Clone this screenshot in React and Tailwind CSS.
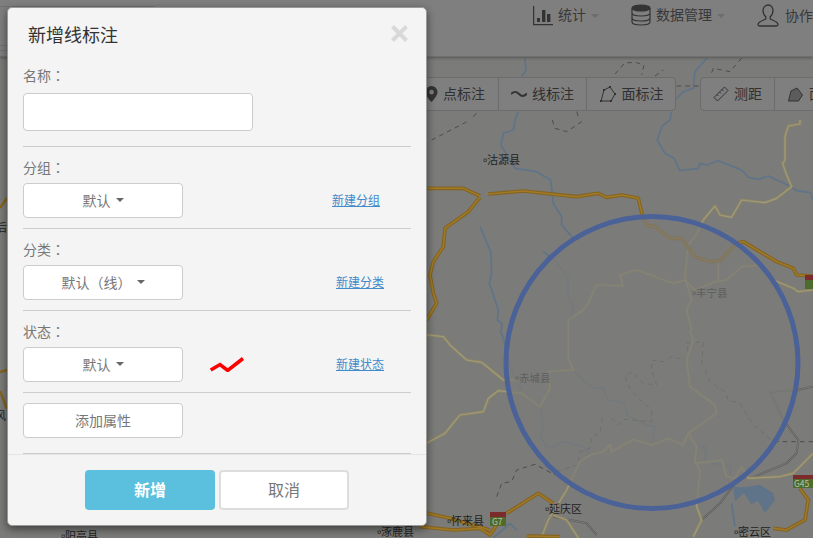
import { Fragment } from "react";

const cjk = "font-['Noto_Sans_CJK_SC','Liberation_Sans',sans-serif] [text-spacing-trim:space-all]";

// map lines, in 3x coords of the two map crops
const upper = {
  rivers: [
    "285,0 280,30 250,40 243,75 285,145 350,155 392,180 400,250 425,290 425,315 460,355",
    "750,0 725,20 712,60 735,100 762,115 780,152 835,145 840,130 860,135 895,122 965,150 985,172 1015,178 1045,168 1110,198 1130,212 1172,218 1179,240",
    "180,320 212,395 215,460 208,490 235,570 232,600 245,610 245,630",
    "370,395 405,420 445,475 445,530 460,560 445,620",
  ],
  yellow: [
    "1140,0 1140,12 1105,18 1095,50 1095,120 1088,130 1100,165 1115,200 1070,235 1035,248 965,240 935,292 900,285 885,258 850,300 825,350 805,375 795,470 800,490 815,540 800,570 815,630",
    "445,630 445,600 490,570 505,550 530,495 610,497 600,465 650,450 760,490 795,480 825,510 885,485 920,480 965,440 1020,435 1060,480 1120,505 1135,515 1179,510",
    "895,425 895,480",
  ],
  orange: [
    "0,205 130,205 180,228",
    "205,222 310,213 470,230 535,220 560,232 605,225 655,235 668,290 680,315 705,320 750,355 785,355 825,410 870,425 900,422 950,370 970,365 1070,425 1120,445 1130,465 1179,468",
    "180,232 145,275 75,325 70,380 40,425 30,465 40,520 50,550 20,600",
  ],
  dashed: ["35,60 145,3", "397,0 405,25 440,35 485,5"],
};

const lower = {
  rivers: [
    "360,230 370,290 360,320 385,355 430,335 490,350 510,375",
    "460,125 520,175 550,175 565,210 615,220 620,255 680,285 705,290 695,335",
    "240,0 250,25 270,110 305,180",
    "935,520 945,590",
    "835,350 855,350 855,395 930,410 930,435",
    "220,624 270,580 290,600",
  ],
  yellow: [
    "0,12 70,20 90,45 140,90 185,97 250,150 305,150",
    "0,350 75,310 120,255 190,245 205,205 235,182 305,190 360,230 390,175 385,125 460,120 445,85 445,0",
    "480,395 510,375 550,365 570,345 575,365 640,328 695,345 745,325 790,345 805,310 890,250 885,225 810,170 800,90 820,30 810,0",
    "805,310 830,350 825,395 840,420 830,530 845,570 820,620",
    "825,400 870,395 905,390 920,440 945,445 965,410 985,445 1080,440 1120,430 1179,370",
    "480,395 440,480 385,570 365,620",
    "400,555 440,570 475,624",
  ],
  orange: [
    "0,545 90,565 210,600",
    "260,550 355,490 400,520",
    "0,590 100,600 180,595 210,615 250,555",
    "1140,475 1165,510 1155,570 1100,600 1060,595",
    "320,618 420,620",
  ],
  dashed: [
    "230,500 245,460 275,455 290,420 345,403 405,435",
    "410,425 470,405",
    "475,395 480,365 510,355 515,320 540,310 548,255",
    "575,265 595,285 610,268 695,275 695,240 660,210 630,175 615,140 635,125 670,160 710,165 695,120 695,90 730,95 755,80 795,90",
    "805,65 800,40 850,35 845,105",
    "855,120 870,155 915,185 925,210 960,220 1000,285 1060,335 1180,335",
  ],
  rail: [
    "1050,185 1130,180 1179,170",
    "1050,185 1090,270 1135,330 1130,370 1100,400 990,445",
    "400,560 500,580 530,615",
    "845,570 900,520 945,460",
  ],
};

const top = {
  rivers: ["315,175 318,210 305,230", "295,335 285,360", "860,175 825,215 820,265 790,275 765,300", "755,335 750,360"],
  dashed: [
    "585,222 615,188 650,188 672,195 665,225",
    "705,228 730,210",
    "770,258 840,258",
    "875,218 880,205 930,215 965,175",
    "160,350 175,333",
    "470,335 475,350",
  ],
};

const Lines = ({ list = [], color, width, dash }) =>
  list.map((p) => (
    <polyline key={p} points={p} fill="none" stroke={color} strokeWidth={width} strokeDasharray={dash} strokeLinejoin="round" />
  ));

const Road = ({ list, edge, core, width }) => (
  <Fragment>
    <Lines list={list} color={edge} width={width} />
    <Lines list={list} color={core} width={width * 0.4} />
  </Fragment>
);

const MapLayer = ({ data }) => (
  <Fragment>
    <Lines list={data.rivers} color="#5f7489" width={5} />
    <Lines list={data.rail} color="#5c5c5c" width={6} />
    <Lines list={data.rail} color="#8a8a8a" width={2} />
    <Lines list={data.dashed} color="#4c4c4c" width={3} dash="14 12" />
    {data.yellow && <Road list={data.yellow} edge="#8b8565" core="#a09a7c" width={9} />}
    {data.orange && <Road list={data.orange} edge="#85641f" core="#a07a28" width={11} />}
  </Fragment>
);

const mapLabels = [
  [487, 164, "沽源县", "#1f1f1f", 11],
  [696, 297, "丰宁县", "#5e5e5e", 10.5],
  [519, 382, "赤城县", "#5e5e5e", 10.5],
  [549, 513, "延庆区", "#1f1f1f", 11],
  [451, 525, "怀来县", "#1f1f1f", 11],
  [738, 536, "密云区", "#1f1f1f", 11],
  [65, 540, "阳高县", "#1f1f1f", 11],
  [381, 536, "涿鹿县", "#1f1f1f", 11],
];

const MapBackdrop = () => (
  <svg className="absolute inset-0" width="813" height="538" viewBox="0 0 813 538">
    <rect width="813" height="538" fill="#7b7b79" />
    <g transform="translate(420 120) scale(0.3333)">
      <MapLayer data={upper} />
    </g>
    <g transform="translate(420 330) scale(0.3333)">
      <MapLayer data={lower} />
    </g>
    <g transform="translate(420 0) scale(0.3333)">
      <MapLayer data={top} />
    </g>
    {/* bits of the map left of the dialog */}
    <path d="M0 208L7 198M0 372L7 370M0 391L7 409" stroke="#85641f" strokeWidth="2.500" fill="none" />
    <text x="-4" y="232" fontSize="11" fill="#1f1f1f" fontFamily="'Noto Sans CJK SC', sans-serif">后</text>
    <text x="-5" y="420" fontSize="11" fill="#1f1f1f" fontFamily="'Noto Sans CJK SC', sans-serif">风</text>
    {/* area inside the ring is washed out */}
    <circle cx="652" cy="362.500" r="146" fill="#7b7b79" fillOpacity="0.72" />
    <circle cx="652" cy="362.500" r="146" fill="none" stroke="#4b6298" strokeWidth="5" />
    {/* lake */}
    <path d="M733 487l12 0 15-2 13 8 2 7-10 13-7-12-7 3-7-11-9 8z" fill="#5f7489" />
    {/* road shields */}
    <rect x="490" y="512" width="16" height="10" fill="#7d2a2a" />
    <rect x="490" y="517" width="16" height="9" rx="1" fill="#4d6b2c" />
    <text x="492" y="525" fontSize="8.500" fill="#b9c4a8">G7</text>
    <rect x="793" y="475" width="20" height="10" fill="#7d2a2a" />
    <rect x="793" y="479" width="20" height="9" rx="1" fill="#4d6b2c" />
    <text x="794" y="487" fontSize="8.500" fill="#b9c4a8">G45</text>
    <rect x="805" y="275" width="8" height="10" fill="#7d2a2a" />
    <rect x="805" y="280" width="8" height="9" fill="#4d6b2c" />
    {mapLabels.map(([x, y, t, c, s]) => (
      <Fragment key={t}>
        <rect x={x - 3} y={y - 5} width="2.500" height="2.500" fill="none" stroke={c} strokeWidth="0.6" />
        <text x={x} y={y} fontSize={s} fill={c} fontFamily="'Noto Sans CJK SC', sans-serif">
          {t}
        </text>
      </Fragment>
    ))}
  </svg>
);

const Caret = ({ className = "border-t-[#666]" }) => (
  <span className={`inline-block w-0 h-0 border-x-4 border-x-transparent border-t-4 ${className}`} />
);

const HeadItem = ({ icon, label }) => (
  <div className="flex items-center">
    {icon}
    <span className="text-[14px] leading-[20px] mb-[2px] text-[#383838] ml-[5px]">{label}</span>
  </div>
);

const Header = () => (
  <header className="absolute top-0 left-0 w-[813px] h-[57px] bg-[#7f7f7f] border-b border-[#6f6f6f] shadow-[0_1px_3px_rgba(0,0,0,0.3)] overflow-hidden">
    <div className="absolute left-0 top-[6px] w-[155px] border-t border-[#727272]" />
    <div className="absolute left-0 top-[45px] w-[8px] h-[6px] border-y border-[#727272]" />
    <div className="flex items-start pt-[4px] pl-[532px] whitespace-nowrap">
      <HeadItem
        label="统计"
        icon={
          <svg width="21" height="22" viewBox="0 0 21 22" fill="#333">
            <path d="M1 2h1.200v18H21v1.200H1z" />
            <rect x="5" y="14" width="3" height="4" />
            <rect x="10" y="6" width="3.400" height="12" />
            <rect x="15" y="10" width="3.400" height="8" />
          </svg>
        }
      />
      <span className="ml-[5px] mt-[10px] flex"><Caret className="border-t-[#6d6d6d]" /></span>
      <div className="ml-[32px]">
        <HeadItem
          label="数据管理"
          icon={
            <svg width="20" height="22" viewBox="0 0 20 22" fill="none" stroke="#333" strokeWidth="1.200">
              <ellipse cx="10" cy="4" rx="9" ry="3" fill="#333" />
              <path d="M1 4v14c0 1.800 4 3 9 3s9-1.200 9-3V4M1 9c0 1.800 4 3 9 3s9-1.200 9-3M1 14c0 1.800 4 3 9 3s9-1.200 9-3" />
            </svg>
          }
        />
      </div>
      <span className="ml-[5px] mt-[10px] flex"><Caret className="border-t-[#6d6d6d]" /></span>
      <div className="ml-[32px]">
        <HeadItem
          label="协作"
          icon={
            <svg width="23" height="23" viewBox="0 0 23 23" fill="none" stroke="#333" strokeWidth="1.300">
              <path d="M11.500 1c-3.400 0-5.500 2.500-5.500 5.500 0 2.800 1.300 5 2.800 6.300v2.200c-2 1.200-7.300 2.300-7.800 5.300 0 1 .5 1.700 1.500 1.700h17c1 0 1.500-.7 1.500-1.700-.5-3-5.800-4.100-7.800-5.300v-2.200c1.500-1.300 2.800-3.500 2.800-6.300 0-3-2.100-5.500-4.500-5.500z" />
            </svg>
          }
        />
      </div>
    </div>
  </header>
);

const toolIcons = {
  pin: (
    <svg width="13" height="16" viewBox="0 0 14 17">
      <path fillRule="evenodd" d="M7 0a6.500 6.500 0 0 0-6.500 6.500C.5 10.500 7 17 7 17s6.500-6.500 6.500-10.500A6.500 6.500 0 0 0 7 0zm0 4a2.500 2.500 0 1 1 0 5 2.500 2.500 0 0 1 0-5z" fill="#333" />
    </svg>
  ),
  wave: (
    <svg width="16" height="8" viewBox="0 0 16 8" fill="none" stroke="#333" strokeWidth="2">
      <path d="M0 4c3-3 5-3 8 0s5 2.500 8-.5" />
    </svg>
  ),
  poly: (
    <svg width="18" height="18" viewBox="0 0 18 18" fill="none" stroke="#333" strokeWidth="1">
      <path d="M2 16l3-11 6-3 5 7-4 7z" />
      <g fill="#333" stroke="none">
        <rect x="1" y="15" width="2" height="2" />
        <rect x="4" y="4" width="2" height="2" />
        <rect x="10" y="1" width="2" height="2" />
        <rect x="15" y="8" width="2" height="2" />
        <rect x="11" y="15" width="2" height="2" />
      </g>
    </svg>
  ),
  ruler: (
    <svg width="16" height="16" viewBox="0 0 16 16" fill="none" stroke="#333" strokeWidth="1">
      <path d="M11.500 1L15 4.500 4.500 15 1 11.500zM4 8.500l1.500 1.500M6.500 6l1.500 1.500M9 3.500l1.500 1.500" />
    </svg>
  ),
  area: (
    <svg width="17" height="17" viewBox="0 0 17 17" stroke="#333" strokeWidth="1" fill="#5c5c5c">
      <path d="M1.500 15l2.500-10 6-3 5.500 7-4 6z" />
    </svg>
  ),
};

const ToolBtn = ({ icon, label, className }) => (
  <div className={`flex items-center justify-center gap-[5px] h-full text-[14px] text-[#303030] whitespace-nowrap border-r border-[#6c6c6c] last:border-r-0 ${className}`}>
    {toolIcons[icon]}
    <span className="mb-[2px]">{label}</span>
  </div>
);

const Toolbars = () => (
  <Fragment>
    <div className="absolute left-[411px] top-[77px] h-[34px] flex bg-[#7f7f7f] border border-[#6c6c6c] rounded-[4px]">
      <ToolBtn icon="pin" label="点标注" className="w-[87px]" />
      <ToolBtn icon="wave" label="线标注" className="w-[88px]" />
      <ToolBtn icon="poly" label="面标注" className="w-[88px]" />
    </div>
    <div className="absolute left-[700px] top-[77px] w-[140px] h-[34px] flex bg-[#7f7f7f] border border-[#6c6c6c] rounded-[4px]">
      <ToolBtn icon="ruler" label="测距" className="w-[74px]" />
      <div className="flex items-center gap-[5px] pl-[12px] text-[14px] text-[#303030] whitespace-nowrap">
        {toolIcons.area}
        <span className="mb-[2px]">面积</span>
      </div>
    </div>
  </Fragment>
);

// the colon sits mid-height in the reference, which the TC cut gives
const Label = ({ text }) => (
  <Fragment>
    {text}
    <span className="font-['Noto_Sans_CJK_TC',sans-serif]">：</span>
  </Fragment>
);

const Field = ({ label, children }) => (
  <div className="h-[82px] border-b border-[#cdcdcd]">
    <div className="h-[36px] pt-[11px] text-[14px] leading-[18px] text-[#777]">
      <Label text={label} />
    </div>
    {children}
  </div>
);

const SelectRow = ({ label, value, link, linkPad, extra }) => (
  <Field label={label}>
    <div className="relative flex items-center h-[35px]">
      <button className="w-[160px] h-[35px] bg-white border border-[#ccc] rounded-[4px] text-[14px] text-[#777] flex items-center justify-center gap-[5px]">
        {value} <Caret />
      </button>
      {extra}
      <a className={`text-[12px] text-[#428bca] underline ${linkPad}`} href="#">
        {link}
      </a>
    </div>
  </Field>
);

const Dialog = () => (
  <div className={`absolute left-[7px] top-[7px] w-[420px] h-[519px] flex flex-col bg-[#f4f4f4] rounded-[5px] border border-[#999] shadow-[0_3px_9px_rgba(0,0,0,0.5)] ${cjk}`}>
    <div className="relative h-[51px] pl-[20px] pt-[14px] text-[18px] leading-[24px] text-[#333]">
      新增线标注
      <svg className="absolute left-[383px] top-[17px]" width="17" height="17" viewBox="0 0 17 17" stroke="#d9d9d9" strokeWidth="4">
        <path d="M1.500 1.500l14 14M15.500 1.500l-14 14" />
      </svg>
    </div>
    <div className="flex-1 px-[15px]">
      <div className="h-[88px] border-b border-[#cdcdcd]">
        <div className="text-[14px] leading-[18px] pt-[7px] text-[#777]">
          <Label text="名称" />
        </div>
        <input className="block mt-[9px] w-[230px] h-[38px] bg-white border border-[#ccc] rounded-[4px]" />
      </div>
      <SelectRow label="分组" value="默认" link="新建分组" linkPad="ml-[149px]" />
      <SelectRow label="分类" value="默认（线）" link="新建分类" linkPad="ml-[153px]" />
      <SelectRow
        label="状态"
        value="默认"
        link="新建状态"
        linkPad="ml-[91px]"
        extra={
          <svg className="ml-[26px]" width="36" height="16" viewBox="0 0 36 16" fill="none" stroke="#f00" strokeWidth="3.500">
            <path d="M1.700 14L11 8.500l7.700 6L34 2.500" />
          </svg>
        }
      />
      <div className="pt-[10px] h-[61px] border-b border-[#cdcdcd]">
        <button className="w-[160px] h-[35px] bg-white border border-[#ccc] rounded-[4px] text-[14px] text-[#777]">添加属性</button>
      </div>
    </div>
    <div className="h-[72px] border-t border-[#e5e5e5] flex gap-[4px] pl-[77px] pt-[15px]">
      <button className="w-[130px] h-[40px] pb-[2px] bg-[#5bc0de] rounded-[4px] text-[16px] font-bold text-white">新增</button>
      <button className="w-[130px] h-[40px] pb-[2px] bg-white border-2 border-[#ddd] rounded-[4px] text-[16px] text-[#777]">取消</button>
    </div>
  </div>
);

export default function App() {
  return (
    <div className={`relative w-[813px] h-[538px] overflow-hidden bg-[#7b7b79] ${cjk}`}>
      <MapBackdrop />
      <Header />
      <Toolbars />
      <Dialog />
    </div>
  );
}
